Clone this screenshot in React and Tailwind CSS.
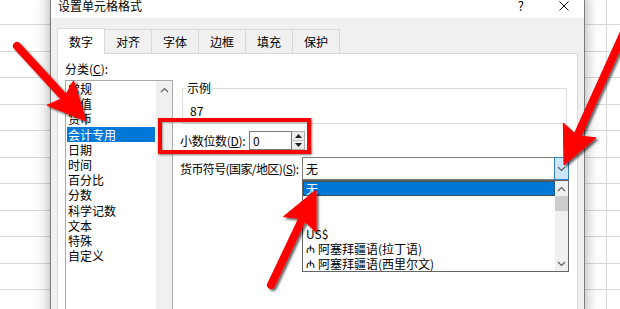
import React from 'react'

/* Spreadsheet rows behind the dialog (line every ~26.5px) */
const ROWS = [
  'h-[25px]', 'h-[27px]', 'h-[26px]', 'h-[27px]', 'h-[26px]', 'h-[27px]',
  'h-[26px]', 'h-[27px]', 'h-[26px]', 'h-[27px]', 'h-[26px]', 'h-[27px]',
]

const TABS = ['数字', '对齐', '字体', '边框', '填充', '保护']

const CATEGORIES = [
  '常规', '数值', '货币', '会计专用', '日期', '时间',
  '百分比', '分数', '科学记数', '文本', '特殊', '自定义',
]

const CURRENCIES = [
  { label: '无' },
  { label: '¥' },
  { label: '$' },
  { label: 'US$' },
  { sym: '₼', label: '阿塞拜疆语(拉丁语)' },
  { sym: '₼', label: '阿塞拜疆语(西里尔文)' },
]

// tail -> tip, returns shaft end + head polygon
function arrow(x1, y1, x2, y2, len = 38, head = 36, notch = 6) {
  const d = Math.hypot(x2 - x1, y2 - y1)
  const ux = (x2 - x1) / d
  const uy = (y2 - y1) / d
  const vx = -uy
  const vy = ux
  const bx = x2 - ux * len
  const by = y2 - uy * len
  const h = head / 2
  const pts = [
    [x2, y2],
    [bx + vx * h, by + vy * h],
    [bx + ux * notch, by + uy * notch],
    [bx - vx * h, by - vy * h],
  ]
  return {
    x1, y1,
    sx: bx + ux * (notch + 2),
    sy: by + uy * (notch + 2),
    head: pts.map(p => p.map(n => n.toFixed(1)).join(',')).join(' '),
  }
}

const ARROWS = [
  arrow(17, 46, 86, 121),
  arrow(271, 285, 316, 190),
  arrow(626, 28, 564, 165),
]

function ChevronUp() {
  return (
    <svg width="9" height="6" viewBox="0 0 9 6">
      <polyline points="1,5 4.5,1.5 8,5" fill="none" stroke="#606060" strokeWidth="1.2" />
    </svg>
  )
}

function ChevronDown({ color = '#606060' }) {
  return (
    <svg width="9" height="6" viewBox="0 0 9 6">
      <polyline points="1,1 4.5,4.5 8,1" fill="none" stroke={color} strokeWidth="1.2" />
    </svg>
  )
}

function Sheet() {
  return (
    <div className="flex flex-col">
      {ROWS.map((h, i) => (
        <div key={i} className={`${h} flex border-b border-[#d8d8d8]`}>
          <div className="w-[607px] border-r border-[#d8d8d8]" />
        </div>
      ))}
    </div>
  )
}

function SpinBox() {
  return (
    <div className="flex h-[19px]">
      <div className="w-[43px] border border-[#7a7a7a] bg-white pl-[3px] leading-[17px]">0</div>
      <div className="w-[13px] flex flex-col border-y border-r border-[#adadad] bg-[#ececec]">
        <div className="flex-1 flex items-center justify-center border-b border-[#c8c8c8]">
          <svg width="7" height="4" viewBox="0 0 7 4"><polygon points="0,4 3.5,0 7,4" fill="#222" /></svg>
        </div>
        <div className="flex-1 flex items-center justify-center">
          <svg width="7" height="4" viewBox="0 0 7 4"><polygon points="0,0 3.5,4 7,0" fill="#222" /></svg>
        </div>
      </div>
    </div>
  )
}

function Dialog() {
  return (
    <div className="absolute left-[50px] top-[-8px] w-[535px] h-[330px] flex flex-col border-x border-[#7d7d7d] bg-[#f0f0f0] shadow-[0_0_14px_rgba(0,0,0,0.35)] overflow-hidden">
      {/* Title bar */}
      <div className="h-[26px] bg-white flex items-center pl-[7px] pt-[2px] text-[12px] text-black whitespace-nowrap">
        <span>设置单元格格式</span>
        <span className="ml-auto mr-[35px] text-[13px]">?</span>
        <svg className="mr-[15px]" width="10" height="10" viewBox="0 0 10 10">
          <path d="M0.5 0.5 L9.5 9.5 M9.5 0.5 L0.5 9.5" stroke="#111" strokeWidth="1" />
        </svg>
      </div>

      <div className="flex-1 flex flex-col px-[6px] pt-[10px]">
        {/* Tabs */}
        <div className="flex items-end h-[25px]">
          {TABS.map((t, i) =>
            i === 0 ? (
              <div key={t} className="relative z-10 -mb-px h-[26px] w-[48px] bg-white border-x border-t border-[#d9d9d9] flex items-center justify-center text-[12px]">
                {t}
              </div>
            ) : (
              <div key={t} className="h-[24px] w-[47px] border-t border-r border-[#d9d9d9] flex items-center justify-center text-[12px] text-black">
                {t}
              </div>
            )
          )}
        </div>

        {/* Panel */}
        <div className="flex-1 flex bg-white border border-[#d9d9d9] pl-[7px] pt-[7px] text-[12px] text-black whitespace-nowrap">
          {/* Category column */}
          <div className="w-[108px] flex flex-col">
            <div className="h-[16px] leading-[16px]">
              分类(<span className="underline">C</span>):
            </div>
            <div className="mt-[3px] h-[240px] flex border border-[#a9a9a9]">
              <div className="w-[90px] px-[1px] flex flex-col">
                {CATEGORIES.map((c, i) => (
                  <div
                    key={c}
                    className={`h-[15.2px] leading-[15px] pl-[1px] ${i === 3 ? 'bg-[#0078d7] text-white' : ''}`}
                  >
                    {c}
                  </div>
                ))}
              </div>
              <div className="w-[16px] bg-[#f0f0f0] flex flex-col items-center pt-[6px]">
                <ChevronUp />
              </div>
            </div>
          </div>

          {/* Right column */}
          <div className="ml-[7px] w-[389px] flex flex-col">
            <div className="relative mt-[27px] ml-[2px] w-[385px] h-[36px] border border-[#dcdcdc] pl-[7px] pt-[14px]">
              <span className="absolute left-[3px] top-[-9px] bg-white px-px leading-[16px]">示例</span>
              <div className="leading-[16px]">87</div>
            </div>

            <div className="mt-[7px] flex items-center">
              <div className="w-[69px] tracking-[-0.3px]">
                小数位数(<span className="underline">D</span>):
              </div>
              <SpinBox />
            </div>

            <div className="mt-[7px] flex items-center">
              <div className="w-[122px] tracking-[-0.6px]">
                货币符号(国家/地区)(<span className="underline">S</span>):
              </div>
              <div className="w-[267px] h-[23px] flex">
                <div className="flex-1 border-y border-l border-[#7a7a7a] pl-[3px] leading-[21px]">无</div>
                <div className="w-[15px] border border-[#3a7fc1] bg-[#cce4f7] flex items-center justify-center">
                  <ChevronDown />
                </div>
              </div>
            </div>
          </div>
        </div>
      </div>
    </div>
  )
}

function CurrencyDropdown() {
  return (
    <div className="absolute left-[302px] top-[180px] w-[267px] h-[92px] flex border border-[#646464] bg-white text-[12px] text-black whitespace-nowrap">
      <div className="flex-1 flex flex-col">
        {CURRENCIES.map((c, i) => (
          <div
            key={i}
            className={`h-[15px] leading-[13px] pl-[2px] flex items-center border border-dotted ${
              i === 0 ? 'bg-[#0078d7] text-white border-[#3a3a3a]' : 'border-transparent'
            }`}
          >
            {c.sym && <span className="w-[12px] text-[11px]">{c.sym}</span>}
            <span>{c.label}</span>
          </div>
        ))}
      </div>
      <div className="w-[13px] bg-[#f0f0f0] flex flex-col items-center">
        <div className="h-[15px] flex items-center"><ChevronUp /></div>
        <div className="w-full h-[15px] bg-[#cdcdcd]" />
        <div className="mt-auto h-[15px] flex items-center"><ChevronDown /></div>
      </div>
    </div>
  )
}

function Annotations() {
  return (
    <svg className="absolute inset-0 pointer-events-none" width="620" height="309" viewBox="0 0 620 309">
      <defs>
        <filter id="sh" x="-20%" y="-20%" width="140%" height="140%">
          <feDropShadow dx="2" dy="2" stdDeviation="1.3" floodColor="#000" floodOpacity="0.6" />
        </filter>
      </defs>
      <g filter="url(#sh)">
        {ARROWS.map((a, i) => (
          <g key={i} fill="#ff0000" stroke="#ff0000">
            <line x1={a.x1} y1={a.y1} x2={a.sx} y2={a.sy} strokeWidth="8" strokeLinecap="round" />
            <polygon points={a.head} strokeWidth="1" strokeLinejoin="round" />
          </g>
        ))}
      </g>
    </svg>
  )
}

export default function App() {
  return (
    <div className="relative w-[620px] h-[309px] overflow-hidden bg-white font-['Noto_Sans_CJK_SC',sans-serif]">
      <Sheet />
      <Dialog />
      <CurrencyDropdown />
      {/* red highlight box round the decimal places field */}
      <div className="absolute left-[158px] top-[118px] w-[153px] h-[36px] border-[4px] border-[#ff0000] shadow-[1px_1px_2px_rgba(0,0,0,0.5),inset_1px_1px_2px_rgba(0,0,0,0.35)]" />
      <Annotations />
    </div>
  )
}
